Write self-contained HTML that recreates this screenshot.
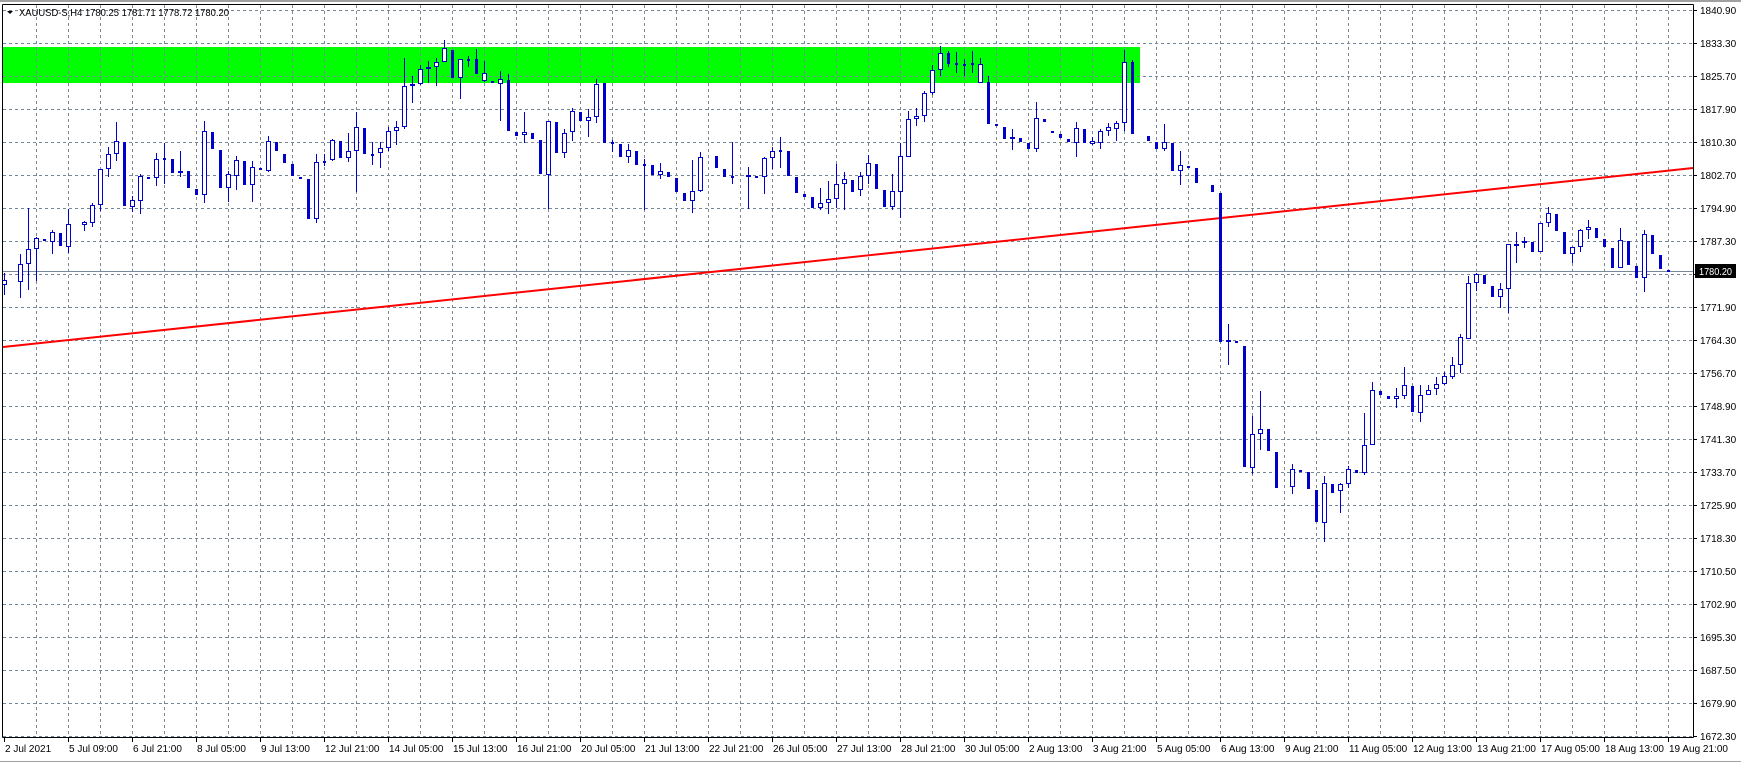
<!DOCTYPE html>
<html><head><meta charset="utf-8">
<style>
html,body{margin:0;padding:0;background:#fff;}
body{width:1741px;height:764px;overflow:hidden;}
svg{display:block;font-family:"Liberation Sans",Tahoma,sans-serif;}
</style></head>
<body>
<svg id="c" width="1741" height="764" xmlns="http://www.w3.org/2000/svg">
<rect x="0" y="0" width="1741" height="764" fill="#fff"/>
<rect x="0" y="0" width="1741" height="2" fill="#a0a0a0"/>
<rect x="0" y="761" width="1741" height="1" fill="#a0a0a0"/>
<rect x="3" y="47" width="1137" height="36" fill="#00ff00"/>
<g id="grid" stroke="#778899" stroke-width="1" stroke-dasharray="3,3" shape-rendering="crispEdges"></g>
<line x1="3" y1="271.5" x2="1693" y2="271.5" stroke="#778899" stroke-width="1" shape-rendering="crispEdges"/>
<line x1="3" y1="347" x2="1693" y2="168" stroke="#ff0000" stroke-width="2"/>
<g id="candles" shape-rendering="crispEdges"></g>
<g stroke="#000" stroke-width="1" shape-rendering="crispEdges" fill="none">
<line x1="2.5" y1="4.5" x2="1693.5" y2="4.5"/>
<line x1="2.5" y1="4.5" x2="2.5" y2="737.5"/>
<line x1="1693.5" y1="4.5" x2="1693.5" y2="737.5"/>
<line x1="2.5" y1="737.5" x2="1693.5" y2="737.5"/>
</g>
<g id="axis" font-size="10" fill="#000"></g>
<path d="M7 11 L13 11 L10 14 Z" fill="#000"/>
<text x="19" y="16" font-size="10" textLength="210" lengthAdjust="spacingAndGlyphs">XAUUSD-S,H4  1780.25 1781.71 1778.72 1780.20</text>
<rect x="1695" y="264" width="41" height="14" fill="#000"/>
<text x="1699" y="275" font-size="10" fill="#fff" textLength="33" lengthAdjust="spacingAndGlyphs">1780.20</text>
</svg>
<script>
var NS="http://www.w3.org/2000/svg";
function el(p,t,a){var e=document.createElementNS(NS,t);for(var k in a)e.setAttribute(k,a[k]);p.appendChild(e);return e;}
var g=document.getElementById('grid');
for(var k=0;k<=22;k++){var y=10+33*k+0.5;el(g,'line',{x1:3,y1:y,x2:1693,y2:y});}
for(var k=0;k<=51;k++){var x=36+32*k+0.5;el(g,'line',{x1:x,y1:5,x2:x,y2:737});}
var ax=document.getElementById('axis');
var prices=["1840.90","1833.30","1825.70","1817.90","1810.30","1802.70","1794.90","1787.30","1779.50","1771.90","1764.30","1756.70","1748.90","1741.30","1733.70","1725.90","1718.30","1710.50","1702.90","1695.30","1687.50","1679.90","1672.30"];
for(var k=0;k<prices.length;k++){var y=10+33*k;
 el(ax,'line',{x1:1693,y1:y+0.5,x2:1697,y2:y+0.5,stroke:'#000','shape-rendering':'crispEdges'});
 if(k==8)continue;
 var t=el(ax,'text',{x:1700,y:y+4});t.textContent=prices[k];}
var dates=["2 Jul 2021","5 Jul 09:00","6 Jul 21:00","8 Jul 05:00","9 Jul 13:00","12 Jul 21:00","14 Jul 05:00","15 Jul 13:00","16 Jul 21:00","20 Jul 05:00","21 Jul 13:00","22 Jul 21:00","26 Jul 05:00","27 Jul 13:00","28 Jul 21:00","30 Jul 05:00","2 Aug 13:00","3 Aug 21:00","5 Aug 05:00","6 Aug 13:00","9 Aug 21:00","11 Aug 05:00","12 Aug 13:00","13 Aug 21:00","17 Aug 05:00","18 Aug 13:00","19 Aug 21:00"];
for(var k=0;k<dates.length;k++){var x=4+64*k;
 el(ax,'line',{x1:x+0.5,y1:737,x2:x+0.5,y2:742,stroke:'#000','shape-rendering':'crispEdges'});
 var t=el(ax,'text',{x:x+1,y:752});t.textContent=dates[k];}
var D=[
[0,'h',280,285,273,295],[2,'h',264,282,254,298],[3,'h',249,264,208,290],[4,'h',238,249,237,281],[5,'f',239,241],
[6,'h',232,242,230,254],[7,'f',233,246],[8,'h',224,247,209,253],[10,'h',222,225,221,231],[11,'h',205,223,203,227],
[12,'h',169,205,169,211],[13,'h',154,169,147,177],[14,'h',141,154,122,161],[15,'f',142,206],[16,'h',200,207,196,212],
[17,'h',176,201,174,214],[18,'f',177,179],[19,'h',159,178,153,186],[20,'f',158,160,143,184],[21,'f',159,173],
[22,'h',171,173,151,177],[23,'f',171,188],[24,'f',189,195],[25,'h',131,195,121,203],[26,'f',132,149],[27,'f',150,188],
[28,'h',174,188,171,202],[29,'h',160,176,156,190],[30,'f',161,185],[31,'h',167,185,161,202],[32,'f',168,170],
[33,'h',141,171,136,172],[34,'f',142,151],[35,'f',154,163],[36,'f',164,176],[37,'f',177,178],[38,'f',179,219],
[39,'h',162,219,154,223],[40,'f',161,163,154,166],[41,'h',140,160,139,161],[42,'f',141,158],[43,'h',151,158,133,162],
[44,'h',127,151,112,192],[45,'f',128,154],[46,'f',154,156,142,165],[47,'h',148,153,142,168],[48,'h',131,148,127,151],
[49,'h',127,131,121,145],[50,'h',86,127,58,129],[51,'h',84,86,76,103],[52,'h',69,84,65,85],[53,'h',67,69,61,83],
[54,'h',62,67,58,86],[55,'h',48,62,40,62],[56,'f',50,78],[57,'h',59,78,59,99],[58,'f',59,60,56,67],[59,'f',59,74,49,74],
[60,'h',73,81,61,82],[61,'f',81,83],[62,'h',79,84,71,121],[63,'f',80,131,74,131],[64,'f',132,136],[65,'h',132,135,112,143],
[66,'f',133,139],[67,'f',140,174],[68,'h',121,175,121,209],[69,'f',122,153],[70,'h',133,153,129,158],[71,'h',111,132,108,141],
[72,'f',112,121],[73,'h',117,121,109,137],[74,'h',84,117,79,123],[75,'f',83,143],[76,'f',142,144,140,152],[77,'f',144,157],
[78,'h',150,157,144,163],[79,'f',151,165],[80,'f',164,165,159,210],[81,'f',165,175],[82,'h',171,175,163,179],[83,'f',172,177],
[84,'f',178,192],[85,'f',193,201],[86,'h',191,201,160,213],[87,'h',157,191,152,192],[89,'f',156,168],[90,'f',169,177],
[91,'f',176,177,142,184],[93,'h',175,177,167,209],[94,'f',176,177],[95,'h',158,177,157,194],[96,'h',151,158,147,169],
[97,'f',150,152,137,168],[98,'f',151,176],[99,'f',177,193],[100,'f',194,197],[101,'f',197,208],[102,'h',203,208,188,210],
[103,'h',199,203,181,214],[104,'h',184,199,164,208],[105,'h',179,184,172,210],[106,'f',180,192],[107,'h',176,190,172,196],
[108,'h',163,176,155,184],[109,'f',164,189],[110,'f',190,207],[111,'h',191,207,174,210],[112,'h',156,192,143,218],
[113,'h',119,157,111,157],[114,'h',116,119,108,126],[115,'h',93,116,91,122],[116,'h',70,93,65,95],[117,'h',53,70,46,76],
[118,'f',53,64,51,67],[119,'f',63,65,52,73],[120,'f',64,66,59,76],[121,'f',63,65,51,73],[122,'h',64,83,58,83],
[123,'f',82,124,76,124],[124,'f',124,126],[125,'f',127,139],[126,'h',137,139,129,150],[127,'f',138,142],[128,'f',143,149],
[129,'h',118,149,102,152],[130,'f',119,122],[131,'f',131,133],[132,'f',134,138],[133,'f',139,142],[134,'h',128,143,122,157],
[135,'f',129,143],[136,'h',141,144,137,145],[137,'h',131,143,129,149],[138,'h',127,131,123,136],[139,'h',123,129,121,141],
[140,'h',62,123,50,131],[141,'f',62,134,60,134],[143,'f',136,141],[144,'f',142,149],[145,'h',142,149,124,151],[146,'f',143,171],
[147,'h',165,171,151,185],[148,'f',166,168],[149,'f',168,183],[151,'f',185,192],[152,'f',193,342],[153,'h',340,342,324,365],
[154,'f',341,343],[155,'f',346,467],[156,'h',434,468,416,474],[157,'h',429,434,391,450],[158,'f',429,451],[159,'f',452,488],
[161,'h',469,487,464,494],[162,'f',470,471],[163,'f',472,489],[164,'f',490,522],[165,'h',483,523,476,542],[166,'f',484,493],
[167,'h',484,491,483,513],[168,'h',469,484,466,488],[169,'f',470,473],[170,'h',445,473,413,475],[171,'h',390,445,382,445],
[172,'f',391,395],[173,'f',396,399],[174,'h',396,399,388,408],[175,'h',385,396,367,399],[176,'f',386,412],[177,'h',395,413,385,422],
[178,'h',390,395,385,395],[179,'h',384,389,377,395],[180,'h',376,384,372,385],[181,'h',365,377,357,379],[182,'h',337,365,334,373],
[183,'h',283,339,276,339],[184,'h',274,283,273,291],[185,'f',275,284],[186,'f',286,297],[187,'h',289,297,283,308],
[188,'h',244,289,244,313],[189,'h',244,245,232,263],[190,'h',241,243,237,248],[191,'f',242,252],[192,'h',223,252,223,252],
[193,'h',213,223,207,227],[194,'f',214,231],[195,'f',232,254],[196,'h',247,254,247,263],[197,'h',230,247,229,252],
[198,'h',227,230,220,239],[199,'f',228,238],[200,'f',239,247],[201,'f',248,268],[202,'h',240,268,228,268],[203,'f',241,265],
[204,'f',266,278],[205,'h',234,278,230,292],[206,'f',235,254],[207,'f',255,269],[208,'f',270,272]
];
var cg=document.getElementById('candles');var C='#0000cc';
D.forEach(function(d){
 var cx=Math.round(4+8*d[0]);var bt=d[2],bb=d[3];var wt=d.length>4?d[4]:bt,wb=d.length>5?d[5]:bb;
 if(wt<bt||wb>bb) el(cg,'rect',{x:cx,y:wt,width:1,height:Math.max(1,wb-wt),fill:C});
 if(d[1]=='h'){
  el(cg,'rect',{x:cx-1.5,y:bt+0.5,width:4,height:Math.max(1,bb-bt-1),fill:'#fff',stroke:C,'stroke-width':1});
 } else {
  el(cg,'rect',{x:cx-1,y:bt,width:3,height:Math.max(2,bb-bt),fill:C});
 }
});
</script>
</body></html>
